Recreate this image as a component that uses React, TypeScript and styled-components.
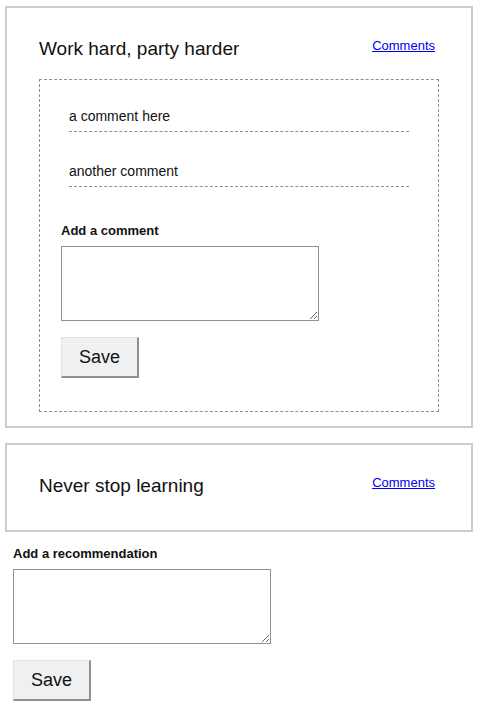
import React from "react";
import styled, { createGlobalStyle } from "styled-components";

const GlobalStyle = createGlobalStyle`
  html, body {
    margin: 0;
    padding: 0;
    background: #ffffff;
  }
  body {
    font-family: "Liberation Sans", Arial, Helvetica, sans-serif;
    color: #111111;
  }
`;

const Page = styled.div`
  display: flex;
  flex-direction: column;
  width: 468px;
  padding: 6px 0 0 5px;
`;

const Card = styled.section<{ $bottom: number }>`
  border: 2px solid #c9cdd1;
  padding: 30px 32px ${(p) => p.$bottom}px 32px;
  & + & {
    margin-top: 15px;
  }
`;

const CardHeader = styled.div`
  display: flex;
  justify-content: space-between;
  align-items: flex-start;
`;

const Title = styled.h2`
  margin: 0;
  font-size: 19px;
  font-weight: normal;
  line-height: 22px;
  color: #111111;
`;

const CommentsLink = styled.a`
  margin-right: 4px;
  font-size: 13px;
  line-height: 16px;
  color: #0000ee;
  text-decoration: underline;
  cursor: pointer;
`;

const Thread = styled.div`
  margin-top: 19px;
  border: 1px dashed #8f8f8f;
  padding: 28px 21px 33px;
  display: flex;
  flex-direction: column;
`;

const CommentList = styled.ul`
  list-style: none;
  margin: 0 8px;
  padding: 0;
  display: flex;
  flex-direction: column;
  gap: 31px;
`;

const CommentItem = styled.li`
  font-size: 14px;
  line-height: 16px;
  padding-bottom: 7px;
  border-bottom: 1px dashed #8f8f8f;
`;

const Form = styled.form<{ $indent: number; $top: number }>`
  display: flex;
  flex-direction: column;
  align-items: flex-start;
  margin-top: ${(p) => p.$top}px;
  padding-left: ${(p) => p.$indent}px;
`;

const Label = styled.label`
  font-size: 13px;
  font-weight: bold;
  line-height: 15px;
  margin-bottom: 8px;
  color: #111111;
`;

const TextArea = styled.textarea`
  box-sizing: border-box;
  width: 258px;
  height: 75px;
  border: 1px solid #8e9397;
  padding: 2px;
  font-family: "Liberation Sans", Arial, sans-serif;
  font-size: 13px;
  resize: both;
  margin: 0;
  outline: none;
`;

const SaveButton = styled.button`
  box-sizing: border-box;
  margin-top: 16px;
  width: 78px;
  height: 41px;
  padding: 0;
  background: #eff0ef;
  border-style: solid;
  border-width: 1px 2px 2px 1px;
  border-color: #e2e2e2 #8c9196 #8c9196 #e2e2e2;
  font-family: "Liberation Sans", Arial, sans-serif;
  font-size: 18px;
  color: #111111;
  cursor: pointer;
`;

export default function App() {
  return (
    <>
      <GlobalStyle />
      <Page>
        <Card $bottom={14}>
          <CardHeader>
            <Title>Work hard, party harder</Title>
            <CommentsLink href="#">Comments</CommentsLink>
          </CardHeader>
          <Thread>
            <CommentList>
              <CommentItem>a comment here</CommentItem>
              <CommentItem>another comment</CommentItem>
            </CommentList>
            <Form $indent={0} $top={36} onSubmit={(e) => e.preventDefault()}>
              <Label htmlFor="comment">Add a comment</Label>
              <TextArea id="comment" />
              <SaveButton type="submit">Save</SaveButton>
            </Form>
          </Thread>
        </Card>
        <Card $bottom={33}>
          <CardHeader>
            <Title>Never stop learning</Title>
            <CommentsLink href="#">Comments</CommentsLink>
          </CardHeader>
        </Card>
        <Form $indent={8} $top={14} onSubmit={(e) => e.preventDefault()}>
          <Label htmlFor="recommendation">Add a recommendation</Label>
          <TextArea id="recommendation" />
          <SaveButton type="submit">Save</SaveButton>
        </Form>
      </Page>
    </>
  );
}
